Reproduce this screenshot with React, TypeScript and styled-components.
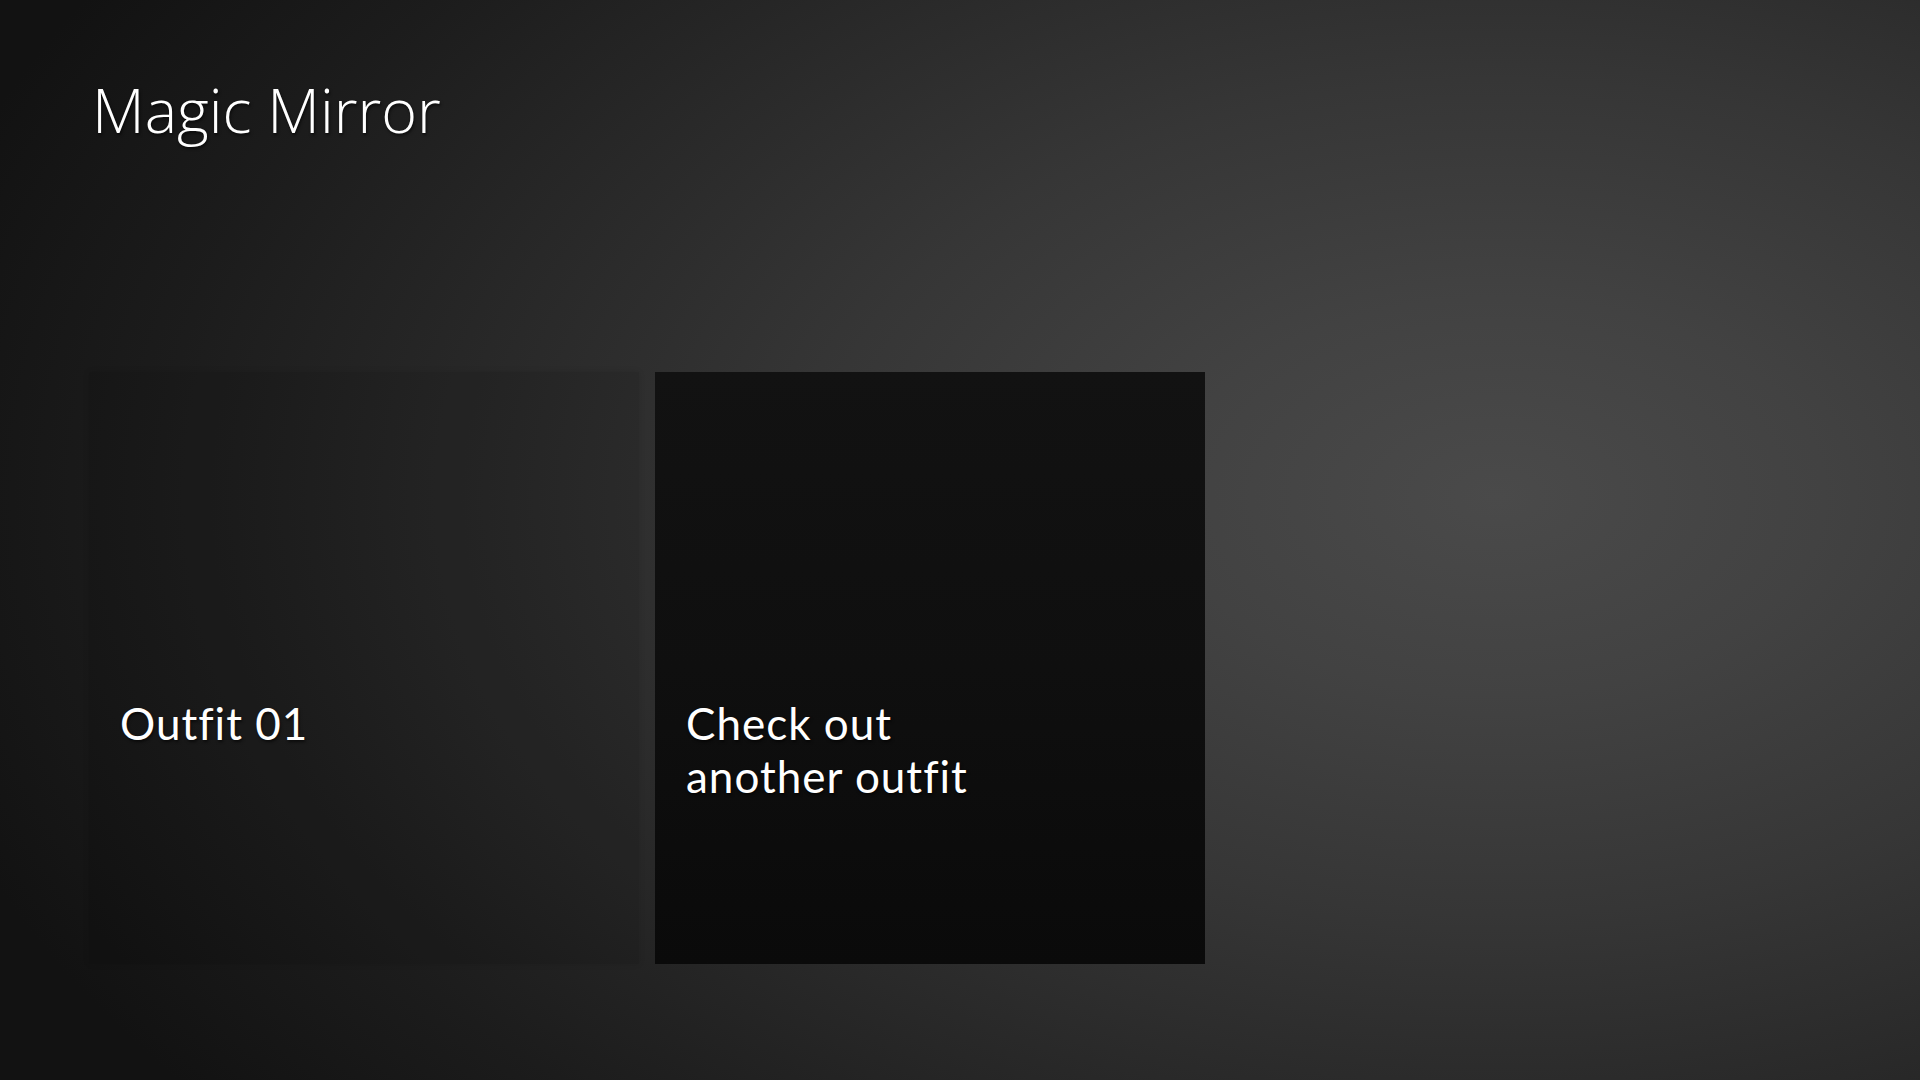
import React from "react";
import styled, { createGlobalStyle } from "styled-components";

const GlobalStyle = createGlobalStyle`
  html, body {
    margin: 0;
    padding: 0;
    width: 100%;
    height: 100%;
    background: #151515;
  }
  #root {
    height: 100%;
  }
`;

const Screen = styled.main`
  box-sizing: border-box;
  width: 1920px;
  height: 1080px;
  overflow: hidden;
  padding: 72px 0 0 89px;
  display: flex;
  flex-direction: column;
  font-family: "Open Sans", "Noto Sans", sans-serif;
  color: #ffffff;
  background: radial-gradient(
    ellipse 85% 92% at 78% 46%,
    #4a4a4a 0%,
    #424242 20%,
    #363636 42%,
    #292929 62%,
    #1c1c1c 82%,
    #121212 100%
  );
`;

const Title = styled.h1`
  margin: 0 0 0 3px;
  font-size: 61px;
  font-weight: 300;
  line-height: 76px;
  text-shadow: 1px 2px 3px rgba(0, 0, 0, 0.6);
`;

const CardRow = styled.section`
  display: flex;
  gap: 16px;
  margin-top: 224px;
`;

const Card = styled.div<{ $variant: "ghost" | "solid" }>`
  box-sizing: border-box;
  width: 550px;
  height: 592px;
  padding: 325px 30px 0 31px;
  display: flex;
  flex-direction: column;
  background: ${(p) =>
    p.$variant === "solid"
      ? "linear-gradient(180deg, #121212 0%, #0f0f0f 50%, #0a0a0a 100%)"
      : "rgba(0, 0, 0, 0.1)"};
  box-shadow: ${(p) =>
    p.$variant === "solid" ? "none" : "0 0 6px rgba(0, 0, 0, 0.12)"};
`;

const CardLine = styled.span`
  display: block;
  font-family: Lato, "Open Sans", sans-serif;
  font-size: 44px;
  font-weight: 400;
  line-height: 53px;
  height: 53px;
  letter-spacing: 1px;
  white-space: nowrap;
  text-shadow: 1px 2px 3px rgba(0, 0, 0, 0.6);
`;

export default function App() {
  return (
    <>
      <GlobalStyle />
      <Screen>
        <Title>Magic Mirror</Title>
        <CardRow>
          <Card $variant="ghost">
            <CardLine>Outfit 01</CardLine>
          </Card>
          <Card $variant="solid">
            <CardLine>Check out</CardLine>
            <CardLine>another outfit</CardLine>
          </Card>
        </CardRow>
      </Screen>
    </>
  );
}
